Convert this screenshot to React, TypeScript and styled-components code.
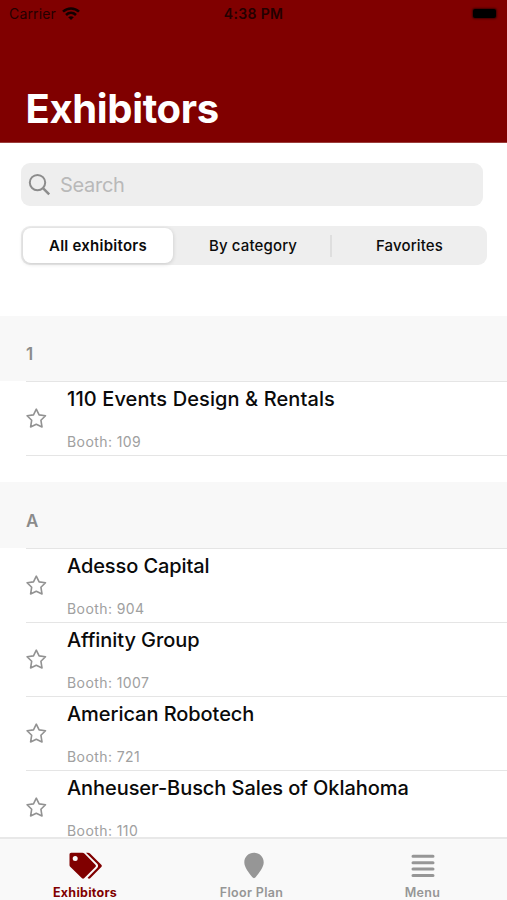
import React from "react";
import styled, { createGlobalStyle } from "styled-components";

const GlobalStyle = createGlobalStyle`
  * { box-sizing: border-box; }
  body { margin: 0; background: #fff; }
`;

const Screen = styled.div`
  width: 507px;
  height: 900px;
  display: flex;
  flex-direction: column;
  overflow: hidden;
  background: #fff;
  font-family: Inter, "Liberation Sans", sans-serif;
`;

const Header = styled.header`
  height: 143px;
  flex: none;
  display: flex;
  flex-direction: column;
  justify-content: space-between;
  background: #800000;
  border-bottom: 1px solid #9b3d3a;
`;

const StatusBar = styled.div`
  height: 28px;
  padding: 0 11px 0 9px;
  display: grid;
  grid-template-columns: 1fr auto 1fr;
  align-items: center;
  color: #240000;
  font-size: 14px;
  line-height: 28px;
`;

const Carrier = styled.div`
  display: flex;
  align-items: center;
  gap: 6px;
  letter-spacing: 0.15px;
`;

const Clock = styled.div`
  padding-left: 2px;
  font-weight: 600;
  letter-spacing: 0.35px;
`;

const Battery = styled.div`
  justify-self: end;
  width: 23px;
  height: 9px;
  margin-top: -2px;
  border-radius: 2px;
  background: #000;
  box-shadow: 0 0 2px 1px #400000;
`;

const Title = styled.h1`
  margin: 0 0 9px 25.5px;
  color: #fff;
  font-size: 40px;
  line-height: 48px;
  font-weight: 700;
  letter-spacing: -0.35px;
`;

const Controls = styled.div`
  height: 173px;
  flex: none;
  padding: 20px 20px 0 21px;
  display: flex;
  flex-direction: column;
  gap: 20px;
`;

const SearchField = styled.div`
  width: 462px;
  height: 43px;
  padding-left: 7px;
  display: flex;
  align-items: center;
  gap: 8px;
  border-radius: 9px;
  background: #eee;
  color: #b9b9b9;
  font-size: 20px;
  letter-spacing: -0.3px;
`;

const Segments = styled.div`
  height: 39px;
  padding: 2px;
  display: grid;
  grid-template-columns: 150px 1fr 2px 153px;
  align-items: center;
  border-radius: 9px;
  background: #eee;
`;

const Segment = styled.div<{ $active?: boolean; $inset?: number }>`
  height: 35px;
  padding-left: ${(p) => p.$inset ?? 0}px;
  display: flex;
  align-items: center;
  justify-content: center;
  border-radius: 8px;
  font-size: 15px;
  font-weight: ${(p) => (p.$active ? 600 : 500)};
  letter-spacing: ${(p) => (p.$active ? 0.25 : 0.15)}px;
  color: #0b0b0b;
  background: ${(p) => (p.$active ? "#fff" : "transparent")};
  box-shadow: ${(p) => (p.$active ? "0 1px 4px rgba(0,0,0,.16)" : "none")};
`;

const Divider = styled.div`
  height: 22px;
  width: 2px;
  background: #dedede;
`;

const List = styled.main`
  flex: 1;
  min-height: 0;
  overflow: hidden;
`;

const Section = styled.section`
  margin-bottom: 26px;
`;

const SectionTitle = styled.h2<{ $height: number }>`
  height: ${(p) => p.$height}px;
  margin: 0;
  padding-left: 26px;
  padding-top: ${(p) => p.$height - 39}px;
  background: #f8f8f8;
  color: #8b8b8b;
  font-size: 17px;
  line-height: 24px;
  font-weight: 600;
`;

const Rows = styled.div`
  margin-left: 26px;
  border-top: 1px solid #e5e5e5;
`;

const Row = styled.article`
  height: 74px;
  display: flex;
  border-bottom: 1px solid #e5e5e5;
`;

const StarBox = styled.div`
  width: 41px;
  padding-top: 26px;
  line-height: 0;
`;

const Name = styled.div<{ $spacing: number }>`
  padding-top: 4px;
  color: #0a0a0a;
  font-size: 20px;
  line-height: 26px;
  font-weight: 500;
  letter-spacing: ${(p) => p.$spacing}px;
`;

const Booth = styled.div`
  margin-top: 20px;
  color: #a0a0a0;
  font-size: 14px;
  line-height: 20px;
  letter-spacing: 0.42px;
`;

const TabBar = styled.nav`
  height: 63px;
  flex: none;
  display: grid;
  grid-template-columns: 170px 163px 179px;
  border-top: 2px solid #e8e8e8;
  background: #f9f9f9;
`;

const Tab = styled.div<{ $active?: boolean }>`
  display: flex;
  flex-direction: column;
  align-items: center;
  color: ${(p) => (p.$active ? "#800000" : "#969696")};
  font-size: 12.5px;
  font-weight: ${(p) => (p.$active ? 700 : 600)};
  letter-spacing: ${(p) => (p.$active ? 0.25 : 0.35)}px;
  line-height: 16px;
`;

const TabIcon = styled.div<{ $shift?: number }>`
  height: 46px;
  padding: 13px 0 0 ${(p) => p.$shift ?? 0}px;
  line-height: 0;
`;

const Wifi = () => (
  <svg width="18" height="14" viewBox="0 0 18 14" fill="none" stroke="#120000" strokeWidth="2.6">
    <path d="M1 4.6C5.5.4 12.5.4 17 4.6M4 8c3-2.8 7-2.8 10 0" />
    <path d="M6.2 10.2c1.7-1.4 3.9-1.4 5.6 0L9 13.1Z" fill="#120000" stroke="none" />
  </svg>
);

const SearchIcon = () => (
  <svg width="24" height="24" viewBox="0 0 24 24" fill="none" stroke="#8c8c8c" strokeWidth="2">
    <circle cx="9.5" cy="9.6" r="7.7" />
    <path d="m15.2 15.4 6 6" strokeWidth="2.5" />
  </svg>
);

const Star = () => (
  <svg width="21" height="21" viewBox="0 0 21 21" fill="none" stroke="#929292" strokeWidth="1.6" strokeLinejoin="round">
    <path d="m10.3 1.2 2.8 5.7 6.4.8-4.6 4.5 1.1 6.8-5.7-2.8L4.6 19l1.1-6.8-4.6-4.5 6.4-.8Z" />
  </svg>
);

const Tags = () => (
  <svg width="33" height="27" viewBox="0 0 33 27" fill="currentColor">
    <path fillRule="evenodd" d="M2.2.8h11.2c.8 0 1.5.3 2 .8l11 11.2c.7.7.7 1.6 0 2.3L15.1 26.2c-.6.6-1.5.6-2.1 0L1.2 14.7c-.5-.5-.7-1.1-.7-1.8V2.5C.5 1.5 1.2.8 2.2.8ZM6.2 4a2.5 2.5 0 1 0 0 5 2.5 2.5 0 0 0 0-5Z" />
    <path d="M17 .8h2c.8 0 1.5.3 2 .8l11.3 11.2c.7.7.7 1.6 0 2.3L21.2 26.2c-.7.6-1.6.6-2.2 0l-.4-.5 9.6-9.7c1.2-1.2 1.2-3 0-4.2Z" />
  </svg>
);

const Pin = () => (
  <svg width="20" height="27" viewBox="0 0 20 27" fill="currentColor">
    <path d="M10 .7C4.5.7.3 4.9.3 10.2c0 5.1 4.5 10.3 8.1 15.1.8 1.1 2.4 1.1 3.2 0 3.6-4.8 8.1-10 8.1-15.1C19.7 4.9 15.5.7 10 .7Z" />
  </svg>
);

const MenuLines = () => (
  <svg width="24" height="27" viewBox="0 0 24 27" stroke="currentColor" strokeWidth="3" strokeLinecap="round">
    <path d="M2 4.3h20M2 10.7h20M2 17.1h20M2 23.5h20" />
  </svg>
);

interface Exhibitor {
  name: string;
  booth: string;
  spacing: number;
}

const sections: { title: string; height: number; items: Exhibitor[] }[] = [
  {
    title: "1",
    height: 65,
    items: [{ name: "110 Events Design & Rentals", booth: "109", spacing: 0.1 }],
  },
  {
    title: "A",
    height: 66,
    items: [
      { name: "Adesso Capital", booth: "904", spacing: -0.1 },
      { name: "Affinity Group", booth: "1007", spacing: -0.07 },
      { name: "American Robotech", booth: "721", spacing: -0.06 },
      { name: "Anheuser-Busch Sales of Oklahoma", booth: "110", spacing: -0.07 },
    ],
  },
];

export default function App() {
  return (
    <Screen>
      <GlobalStyle />
      <Header>
        <StatusBar>
          <Carrier>Carrier <Wifi /></Carrier>
          <Clock>4:38 PM</Clock>
          <Battery />
        </StatusBar>
        <Title>Exhibitors</Title>
      </Header>
      <Controls>
        <SearchField><SearchIcon />Search</SearchField>
        <Segments>
          <Segment $active>All exhibitors</Segment>
          <Segment $inset={3}>By category</Segment>
          <Divider />
          <Segment $inset={2}>Favorites</Segment>
        </Segments>
      </Controls>
      <List>
        {sections.map((section) => (
          <Section key={section.title}>
            <SectionTitle $height={section.height}>{section.title}</SectionTitle>
            <Rows>
              {section.items.map((item) => (
                <Row key={item.name}>
                  <StarBox><Star /></StarBox>
                  <div>
                    <Name $spacing={item.spacing}>{item.name}</Name>
                    <Booth>Booth: {item.booth}</Booth>
                  </div>
                </Row>
              ))}
            </Rows>
          </Section>
        ))}
      </List>
      <TabBar>
        <Tab $active><TabIcon><Tags /></TabIcon>Exhibitors</Tab>
        <Tab><TabIcon $shift={4}><Pin /></TabIcon>Floor Plan</Tab>
        <Tab><TabIcon><MenuLines /></TabIcon>Menu</Tab>
      </TabBar>
    </Screen>
  );
}
